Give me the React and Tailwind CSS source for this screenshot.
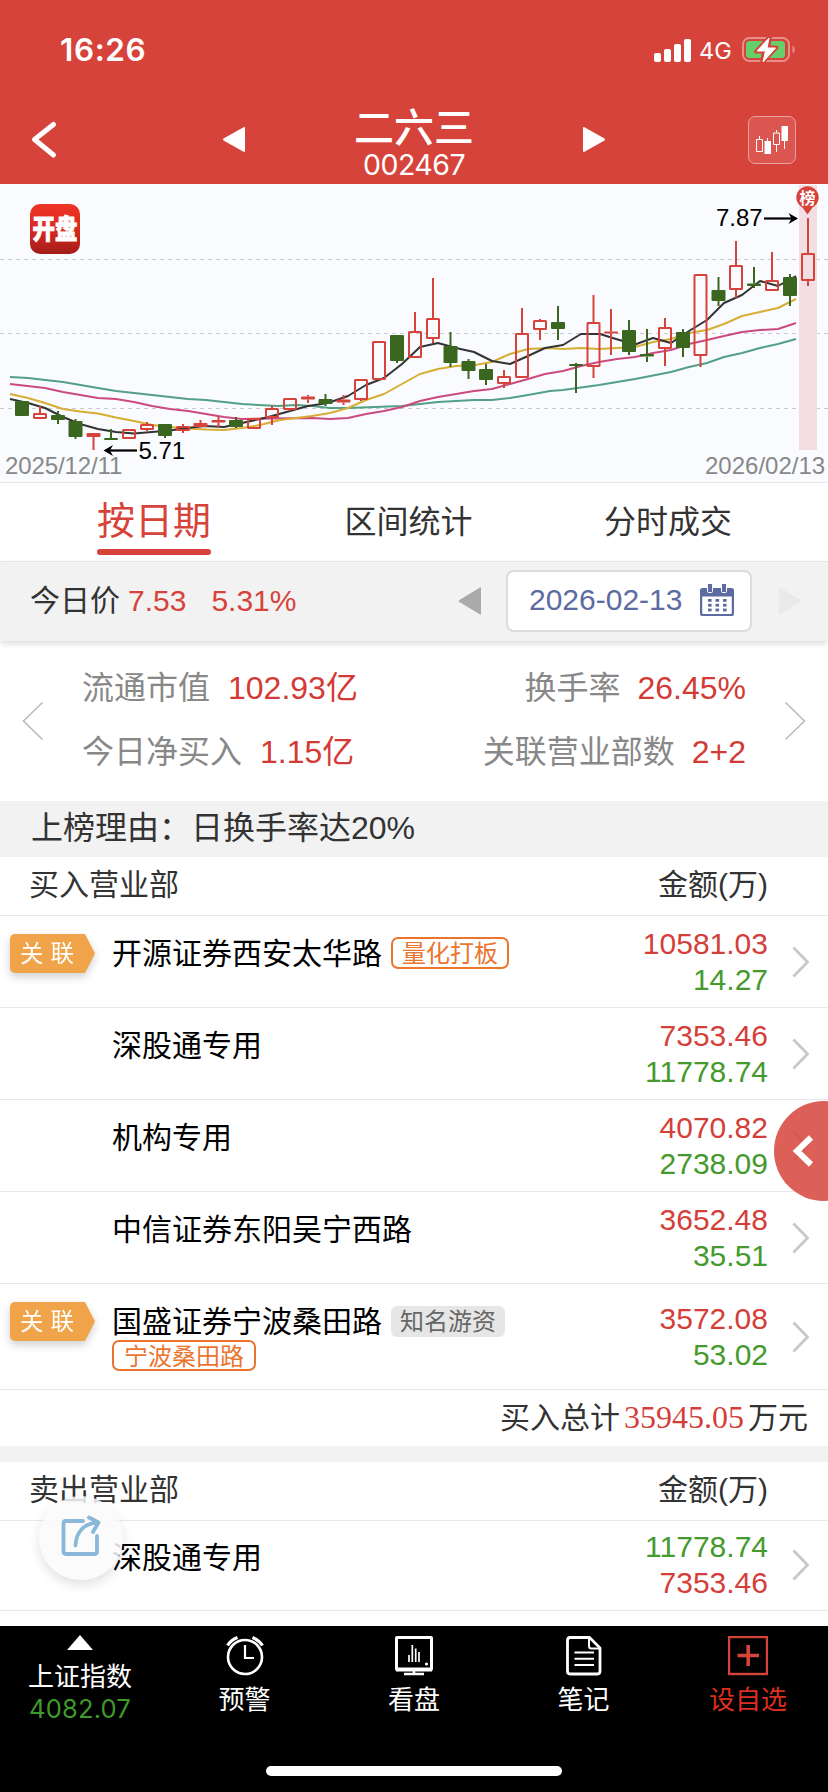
const UP = '#d6433b';
const DOWN = '#3b661f';

// [centre x, direction, high, body top, body bottom, low]
const candles = [
  [22, 'g', 401, 401, 416, 416], [40, 'r', 406, 413, 419, 419], [58, 'g', 411, 415, 420, 424],
  [75.5, 'g', 419, 421, 437, 439], [93.5, 's', 433, 433, 437, 450], [111, 'g', 429, 438, 440, 440],
  [129, 'r', 429, 429, 439, 439], [147, 'r', 422, 424, 430, 431], [165, 'g', 424, 424, 436, 438],
  [183, 'r', 424, 426, 431, 433], [200.5, 's', 420, 423, 427, 427], [218.5, 's', 416, 420, 422.5, 427],
  [236, 'g', 417, 420, 427, 428], [254, 'r', 418, 418, 429, 429], [272, 'r', 406, 408, 418, 425],
  [290, 'r', 398, 398, 410, 411], [308, 's', 395, 396.5, 399.5, 403], [325.5, 'g', 394, 399, 404, 406],
  [343.5, 's', 395, 399.5, 402.5, 405], [361, 'r', 379, 379, 400, 401], [379, 'r', 341, 341, 380, 380],
  [397, 'g', 335, 335, 361, 363], [415, 'r', 312, 331, 358, 358], [433, 'r', 278, 318, 339, 343],
  [450.5, 'g', 332, 346, 363, 367], [468.5, 'g', 359, 361, 371, 379], [486, 'g', 364, 369, 380, 385],
  [504, 'r', 370, 376, 384, 388], [522, 'r', 308, 333, 378, 378], [540, 'r', 319, 320, 330, 340],
  [558, 'g', 306, 322, 329, 340], [576, 'g', 363, 364, 366, 393], [593.5, 'r', 295, 322, 367, 378],
  [611, 's', 309, 331.5, 333.5, 355], [629, 'g', 320, 330, 352, 355], [647, 'g', 329, 354, 356.5, 362],
  [665, 'r', 318, 327, 349, 366], [683, 'g', 329, 332, 348, 357], [700.5, 'r', 274, 274, 356, 367],
  [718.5, 'g', 277, 290, 301, 306], [736, 'r', 241, 265, 290, 298], [754, 'g', 267, 283.5, 286, 288],
  [772, 'r', 252, 280, 291, 291], [790, 'g', 274, 277, 296, 306], [808, 'r', 218, 253, 281, 286],
];

const averages = [
  ['#53a084', '10,377 28,378 63,382 98,388 116,391 152,395 188,399 206,400 242,404 278,406 296,405 312,406 330,408 348,408 402,406 438,402 474,400 492,400 510,398 528,395 550,391 563,390 599,385 635,379 671,372 689,367 707,363 724,357 742,353 760,348 778,344 796,339'],
  ['#cb4a80', '10,384 45,388 63,392 98,398 116,399 134,402 152,406 170,409 188,411 206,414 224,417 242,419 272,418.5 312,418 330,419 348,418 366,414 384,411 402,407 420,401 438,397 456,394 474,391 492,389 510,384 528,379 545,374 563,371 581,366 599,362 617,359 635,357 653,353 671,350 689,344 707,340 724,336 742,332 760,330 778,329 796,323'],
  ['#d6ae35', '10,394 28,398 45,403 63,409 80,411.5 98,413.5 116,417.5 134,421 152,425 170,427 188,428.5 206,429.5 224,430 242,428 260,425 280,420 312,416 330,413 348,408 366,400 384,394 402,384 420,374 438,369 456,366 475,365 492,362 510,354 528,349 548,348 563,349 581,348 599,349 617,348 635,347 653,342 671,339 689,333 707,330 724,324 742,316 760,312 778,308 796,299'],
  ['#333333', '10,399 28,403 45,408 63,417 80,424 98,429 116,432 134,433.5 152,432 170,430.5 187,428 205,426 224,427 242,423 260,419 272,416 290,411 308,406 328,403 348,396 366,385 384,378 402,364 420,347 438,343 456,348 474,352 492,361 510,364 528,356 545,348 563,345 581,334 600,334 616,339 635,344.5 653,338 671,343 689,331 707,320 724,303 742,295 760,281 778,286 796,276'],
];

function Candle({ c }) {
  const [x, kind, high, top, bottom, low] = c;
  const color = kind === 'g' ? DOWN : UP;
  return (
    <g stroke={color} strokeWidth="2" fill={color}>
      {high < top && <line x1={x} x2={x} y1={high} y2={top} />}
      {low > bottom && <line x1={x} x2={x} y1={bottom} y2={low} />}
      {kind === 'r' ? (
        <rect x={x - 6} y={top + 1} width="12" height={bottom - top - 2} rx="0.5" fill="none" />
      ) : (
        <rect x={x - 7} y={top} width="14" height={bottom - top} rx="1" stroke="none" />
      )}
    </g>
  );
}

function Chart() {
  return (
    <svg className="block h-[299px] w-full bg-[#fafbff]" viewBox="0 184 828 299" fontFamily="'Liberation Sans', sans-serif" fontSize="24">
      <defs>
        <linearGradient id="logo" x1="0" y1="0" x2="0" y2="1">
          <stop offset="0" stopColor="#ef3526" />
          <stop offset="0.5" stopColor="#d92a20" />
          <stop offset="1" stopColor="#a11d18" />
        </linearGradient>
      </defs>
      {[259.5, 333.5, 408.5].map((y) => (
        <line key={y} x1="0" x2="828" y1={y} y2={y} stroke="#c9c9ce" strokeDasharray="4 4" />
      ))}
      <rect x="30" y="204" width="50" height="50" rx="10" fill="url(#logo)" />
      <text transform="translate(55 239) scale(0.83 1)" textAnchor="middle" fontSize="27" fontWeight="900" fill="#fff" stroke="#fff" strokeWidth="0.8" fontFamily="'Noto Sans CJK SC', sans-serif">开盘</text>
      {averages.map(([color, points]) => (
        <polyline key={color} points={points} fill="none" stroke={color} strokeWidth="2" strokeLinejoin="round" />
      ))}
      <rect x="799" y="185" width="18" height="265" fill="#f3dfe3" />
      {candles.map((c) => <Candle key={c[0]} c={c} />)}
      <path d="M807.500 214.500 L802.500 207.500 A11.200 11.200 0 1 1 812.500 207.500 Z" fill={UP} />
      <text x="807.500" y="203.500" textAnchor="middle" fontSize="16" fontWeight="700" fill="#fff" fontFamily="'Noto Sans CJK SC', sans-serif">榜</text>
      <text x="716" y="226" fill="#000">7.87</text>
      <path d="M764 218.500H796" stroke="#000" strokeWidth="2.200" />
      <path d="M798 218.500L788.500 213L791.500 218.500L788.500 224Z" fill="#000" />
      <text x="138.500" y="459" fill="#000">5.71</text>
      <path d="M137 450.500H106" stroke="#000" strokeWidth="2.200" />
      <path d="M103.500 450.500L113 445L110 450.500L113 456Z" fill="#000" />
      <text x="5" y="474" fill="#888" letterSpacing="-0.1">2025/12/11</text>
      <text x="705" y="474" fill="#888">2026/02/13</text>
      <rect x="0" y="482" width="828" height="1" fill="#e6e7ea" />
    </svg>
  );
}

function StatusBar() {
  return (
    <div className="flex h-[98px] items-start justify-between pl-[60px] pr-[32px] pt-[32px] text-white">
      <div className="font-['Inter',sans-serif] text-[31.500px] font-semibold leading-[36px] tracking-[0.6px]">16:26</div>
      <div className="flex items-center pt-[5px]">
        <svg className="h-[25px] w-[38px]" viewBox="0 0 38 25" fill="#fff">
          <rect x="0" y="15" width="7" height="9" rx="2" />
          <rect x="10" y="11" width="7" height="13" rx="2" />
          <rect x="20" y="6" width="7" height="18" rx="2" />
          <rect x="30" y="1" width="7" height="23" rx="2" />
        </svg>
        <span className="ml-[7px] w-[43px] font-['Inter',sans-serif] text-[23.500px] leading-[25px]">4G</span>
        <svg className="h-[27px] w-[54px]" viewBox="0 0 54 27">
          <rect x="1" y="1" width="46" height="23" rx="6.500" fill="none" stroke="#e78f8a" strokeWidth="2" />
          <rect x="4" y="4" width="39" height="17" rx="3.500" fill="#65cf69" />
          <path d="M50.500 8.500a4.600 4.600 0 0 1 0 8z" fill="#e78f8a" />
          <path d="M28 -0.500L14 14.500H22L20 26L34.500 10.500H26.500Z" fill="#fff" stroke="#d6433b" strokeWidth="4" strokeLinejoin="round" />
          <path d="M27 1L15 14H23.500L21 25L33.500 11H25Z" fill="#fff" stroke="#fff" strokeWidth="1" strokeLinejoin="round" />
        </svg>
      </div>
    </div>
  );
}

function Header() {
  return (
    <header className="h-[184px] bg-[#d6433b]">
      <StatusBar />
      <div className="flex h-[86px] items-start justify-between pl-[30px] pr-[32px] text-white">
        <svg className="mt-[22px] h-[40px] w-[28px]" viewBox="0 0 28 40" fill="none" stroke="#fff" strokeWidth="5" strokeLinecap="round" strokeLinejoin="round">
          <path d="M23.500 4.500L4.500 19.500L23.500 35" />
        </svg>
        <div className="ml-[22px] flex items-start">
          <svg className="mt-[28px] h-[27px] w-[24px]" viewBox="0 0 24 27" fill="#fff"><path d="M22 1Q23 1 23 2V25Q23 26 22 26L1.500 14.500Q0.500 13.500 1.500 12.500Z" /></svg>
          <div className="flex w-[336px] flex-col items-center">
            <div className="font-['Noto_Sans_CJK_SC',sans-serif] text-[40px] font-medium leading-[54px]">二六三</div>
            <div className="-mt-[3px] font-['Inter',sans-serif] text-[28.500px] leading-[32px] tracking-[-0.5px]">002467</div>
          </div>
          <svg className="mt-[28px] h-[27px] w-[24px]" viewBox="0 0 24 27" fill="#fff"><path d="M2 1Q1 1 1 2V25Q1 26 2 26L22.500 14.500Q23.500 13.500 22.500 12.500Z" /></svg>
        </div>
        <svg className="mt-[18px] h-[48px] w-[48px]" viewBox="0 0 48 48" fill="none" stroke="#fff">
          <rect x="0.500" y="0.500" width="47" height="47" rx="6.500" fill="#db5650" stroke="#eba19d" />
          <path d="M11.500 20v3M8.500 23.500h6v12h-6zM28.500 14v2.500M28.500 29v7M25.500 17h6v11.500h-6zM19.500 22v4M36.500 25v8" strokeWidth="1" />
          <path d="M16.500 25h6.500v13h-6.500zM33.500 10h6.500v15h-6.500z" fill="#fff" stroke="none" />
        </svg>
      </div>
    </header>
  );
}

function Tabs() {
  return (
    <nav className="flex h-[78px] justify-between pl-[97px] pr-[96px] font-['Noto_Sans_CJK_SC',sans-serif] text-[32px] leading-[72px] text-[#333]">
      <div className="flex flex-col text-[38px] leading-[66px] text-[#d6433b]">
        <span className="h-[66px] pt-[2px]">按日期</span>
        <span className="h-[6px] w-[114px] rounded-full bg-[#d6433b]" />
      </div>
      <div className="pl-[2px]">区间统计</div>
      <div>分时成交</div>
    </nav>
  );
}

function CalendarIcon() {
  return (
    <svg className="h-[33px] w-[34px]" viewBox="0 0 34 33" fill="#5c6ba1">
      <path fillRule="evenodd" d="M2.500 4H31.500Q34 4 34 6.500V30Q34 32 32 32H2Q0 32 0 30V6.500Q0 4 2.500 4ZM2.200 12.500V29Q2.200 30 3.200 30H30.800Q31.800 30 31.800 29V12.500Z" />
      <rect x="7.500" y="-0.500" width="5" height="9" rx="1" stroke="#fff" strokeWidth="1" />
      <rect x="21.500" y="-0.500" width="5" height="9" rx="1" stroke="#fff" strokeWidth="1" />
      {[15, 19.800, 24.600].map((y) => [8, 15.500, 23].map((x) => <rect key={`${x}-${y}`} x={x} y={y} width="3.600" height="2.800" />))}
    </svg>
  );
}

function PriceBar() {
  return (
    <div className="relative z-10 flex h-[80px] items-center border-t border-[#e6e6e6] bg-[#f2f2f2] pb-[2px] pl-[30px] pr-[26px] font-['Liberation_Sans','Noto_Sans_CJK_SC',sans-serif] text-[30px] leading-[40px] text-[#d6433b] shadow-[0_3px_6px_rgba(0,0,0,0.13)]">
      <span className="text-[#333]">今日价</span>
      <span className="ml-[8px]">7.53</span>
      <span className="ml-[25px]">5.31%</span>
      <svg className="ml-auto h-[28px] w-[23px]" viewBox="0 0 23 28" fill="#aaa"><path d="M22 0.500Q23 0 23 1V27Q23 28 22 27.500L1 14.800Q0 14 1 13.200Z" /></svg>
      <div className="ml-[25px] flex h-[62px] w-[246px] items-center justify-between rounded-[8px] border-2 border-[#dcdcdc] bg-white pl-[21px] pr-[16px] text-[#5c6ba1]">
        <span className="-mt-[2px]">2026-02-13</span>
        <CalendarIcon />
      </div>
      <svg className="ml-[27px] h-[28px] w-[23px]" viewBox="0 0 23 28" fill="#e9e9e9"><path d="M1 0.500Q0 0 0 1V27Q0 28 1 27.500L22 14.800Q23 14 22 13.200Z" /></svg>
    </div>
  );
}

function Stat({ label, value, gap }) {
  return (
    <div className={`flex ${gap}`}>
      <span className="text-[#888]">{label}</span>
      <span className="text-[#d43a35]">{value}</span>
    </div>
  );
}

function Stats() {
  return (
    <section className="flex h-[160px] items-start pl-[22px] pr-[22px] pt-[15px] font-['Liberation_Sans','Noto_Sans_CJK_SC',sans-serif] text-[32px] leading-[64px]">
      <svg className="mt-[45px] h-[40px] w-[22px]" viewBox="0 0 22 40" fill="none" stroke="#bbb" strokeWidth="1.600"><path d="M20.500 1.500L1.500 20L20.500 38.500" /></svg>
      <div className="flex flex-1 justify-between pl-[38px] pr-[38px]">
        <div>
          <Stat label="流通市值" value="102.93亿" gap="gap-[18px]" />
          <Stat label="今日净买入" value="1.15亿" gap="gap-[18px]" />
        </div>
        <div className="flex flex-col items-end">
          <Stat label="换手率" value="26.45%" gap="gap-[17px]" />
          <Stat label="关联营业部数" value="2+2" gap="gap-[17px]" />
        </div>
      </div>
      <svg className="mt-[45px] h-[40px] w-[22px]" viewBox="0 0 22 40" fill="none" stroke="#bbb" strokeWidth="1.600"><path d="M1.500 1.500L20.500 20L1.500 38.500" /></svg>
    </section>
  );
}

function ListHead({ title }) {
  return (
    <div className="flex h-[59px] justify-between border-b border-[#e8e8e8] pl-[29px] pr-[60px] font-['Liberation_Sans','Noto_Sans_CJK_SC',sans-serif] text-[30px] leading-[56px] text-[#333]">
      <span>{title}</span>
      <span>金额(万)</span>
    </div>
  );
}

function LinkBadge() {
  return (
    <div className="mt-[18px] h-[39px] w-[85px] drop-shadow-[0_4px_4px_rgba(0,0,0,0.18)]">
      <div className="h-[39px] rounded-l-[5px] bg-[#f1a349] pl-[10px] text-[23.500px] leading-[36px] tracking-[7px] text-white [clip-path:polygon(0_0,75px_0,85px_50%,75px_100%,0_100%)]">关联</div>
    </div>
  );
}

function Row({ name, linked, tag, grey, extra, top, bottom, sell, height = 'h-[92px]' }) {
  return (
    <div className={`flex border-b border-[#e8e8e8] pl-[10px] pr-[18px] font-['Noto_Sans_CJK_SC',sans-serif] ${height}`}>
      <div className="w-[85px]">{linked && <LinkBadge />}</div>
      <div className="flex-1 pl-[17px] pt-[17px]">
        <div className="flex h-[40px] items-center gap-[9px] text-[30px] leading-[36px] text-black">
          <span className="h-[40px]">{name}</span>
          {tag && (grey
            ? <span className="h-[31px] rounded-[6px] bg-[#e6e6e6] px-[9px] text-[24px] leading-[27px] text-[#666]">{tag}</span>
            : <span className="h-[32px] rounded-[7px] border-2 border-[#e9752f] px-[9px] text-[24px] leading-[26px] text-[#e9752f]">{tag}</span>)}
        </div>
        {extra && <span className="-mt-px block h-[31px] w-fit rounded-[7px] border-2 border-[#e9752f] px-[10px] text-[24px] leading-[25px] text-[#e9752f]">{extra}</span>}
      </div>
      <div className={`flex flex-col items-end justify-center font-['Liberation_Sans',sans-serif] text-[30px] leading-[36px] ${sell ? 'text-[#459a2d]' : 'text-[#d43f3a]'}`}>
        <span>{top}</span>
        <span className={sell ? 'text-[#d43f3a]' : 'text-[#459a2d]'}>{bottom}</span>
      </div>
      <svg className="ml-[24px] h-[32px] w-[18px] self-center" viewBox="0 0 18 32" fill="none" stroke="#c8c8c8" strokeWidth="2.800"><path d="M1.500 1.500L15.500 16L1.500 30.500" /></svg>
    </div>
  );
}

function ClockIcon() {
  return (
    <svg className="h-[40px] w-[40px]" viewBox="0 0 40 40" fill="none" stroke="#fff" strokeWidth="2.600">
      <circle cx="20" cy="21" r="17" />
      <path d="M20 9V22H29" strokeWidth="2.200" />
      <path d="M2.500 9.500Q6 4 12.500 1.500M37.500 9.500Q34 4 27.500 1.500" strokeWidth="3.200" />
    </svg>
  );
}

function MonitorIcon() {
  return (
    <svg className="h-[40px] w-[40px]" viewBox="0 0 40 40" fill="none" stroke="#fff">
      <rect x="2.500" y="1.500" width="35" height="32" rx="0.500" strokeWidth="3" />
      <path d="M2 33.500H38" strokeWidth="4" />
      <path d="M20 34V38M10 38H30" strokeWidth="2.500" />
      <path d="M15 19V26M18.300 9V26M21.700 12.500V26M25 16V26" strokeWidth="1.700" />
      <circle cx="32.500" cy="28" r="1.600" fill="#fff" stroke="none" />
    </svg>
  );
}

function NoteIcon() {
  return (
    <svg className="h-[40px] w-[40px]" viewBox="0 0 40 40" fill="none" stroke="#fff" strokeWidth="2.800" strokeLinejoin="round">
      <path d="M6 1.500H25.500L36 12V35Q36 38 33.500 38H6Q3.500 38 3.500 35V4.500Q3.500 1.500 6 1.500Z" />
      <path d="M25 2V10Q25 12.500 27.500 12.500H35.500" strokeWidth="2" />
      <path d="M10.500 16.500H30M10.500 22.800H30M10.500 29H30" strokeWidth="2" />
    </svg>
  );
}

function PlusIcon() {
  return (
    <svg className="h-[40px] w-[40px]" viewBox="0 0 40 40" fill="none" stroke="#d6433b">
      <rect x="1" y="1" width="38" height="37" strokeWidth="2.400" />
      <path d="M9.500 19.500H31M20.200 9V30" strokeWidth="3.600" />
    </svg>
  );
}

function NavItem({ icon, label, className }) {
  return (
    <div className={`flex flex-col items-center pt-[10px] leading-[42px] ${className}`}>
      {icon}
      <span className="mt-px">{label}</span>
    </div>
  );
}

function BottomBar() {
  return (
    <footer className="flex h-[166px] flex-col bg-black font-['Noto_Sans_CJK_SC',sans-serif] text-[26px] text-white">
      <div className="flex h-[140px]">
        <div className="flex w-[160px] flex-col items-center pt-[9px]">
          <svg className="h-[15px] w-[26px]" viewBox="0 0 26 15" fill="#fff"><path d="M13 0L26 15H0Z" /></svg>
          <span className="mt-[4px] leading-[42px]">上证指数</span>
          <span className="-mt-[3px] font-['Inter',sans-serif] text-[25.500px] leading-[32px] tracking-[0.2px] text-[#3f9a2a]">4082.07</span>
        </div>
        <NavItem className="w-[169px]" icon={<ClockIcon />} label="预警" />
        <NavItem className="w-[170px]" icon={<MonitorIcon />} label="看盘" />
        <NavItem className="w-[169px]" icon={<NoteIcon />} label="笔记" />
        <NavItem className="w-[160px] text-[#dd2f21]" icon={<PlusIcon />} label="设自选" />
      </div>
      <div className="h-[10px] w-[296px] self-center rounded-full bg-white" />
    </footer>
  );
}

export default function App() {
  return (
    <div className="relative flex h-[1792px] w-[828px] flex-col overflow-hidden bg-white">
      <Header />
      <Chart />
      <Tabs />
      <PriceBar />
      <Stats />
      <div className="h-[56px] bg-[#f2f2f2] pl-[31px] font-['Liberation_Sans','Noto_Sans_CJK_SC',sans-serif] text-[32px] leading-[55px] text-[#333]">上榜理由：日换手率达20%</div>
      <ListHead title="买入营业部" />
      <Row name="开源证券西安太华路" linked tag="量化打板" top="10581.03" bottom="14.27" />
      <Row name="深股通专用" top="7353.46" bottom="11778.74" />
      <Row name="机构专用" top="4070.82" bottom="2738.09" />
      <Row name="中信证券东阳吴宁西路" top="3652.48" bottom="35.51" />
      <Row name="国盛证券宁波桑田路" linked tag="知名游资" grey extra="宁波桑田路" top="3572.08" bottom="53.02" height="h-[106px]" />
      <div className="flex h-[56px] justify-end gap-[4px] pr-[20px] font-['Noto_Sans_CJK_SC',sans-serif] text-[30px] leading-[50px] text-[#333]">
        <span>买入总计</span>
        <span className="font-['Liberation_Serif',serif] text-[32px] leading-[55px] text-[#d43f3a]">35945.05</span>
        <span>万元</span>
      </div>
      <div className="h-[16px] bg-[#f2f2f2]" />
      <ListHead title="卖出营业部" />
      <Row name="深股通专用" top="11778.74" bottom="7353.46" sell height="h-[91px] -mt-px" />
      <div className="flex-1" />
      <BottomBar />

      <div className="absolute left-[774px] top-[1101px] h-[100px] w-[100px] rounded-full bg-[#d6433b]/85">
        <svg className="ml-[18px] mt-[34px] h-[32px] w-[22px]" viewBox="0 0 22 32" fill="none" stroke="#fff" strokeWidth="6"><path d="M19 2.500L5 16L19 29.500" /></svg>
      </div>
      <div className="absolute left-[39px] top-[1496px] flex h-[84px] w-[84px] items-center justify-center rounded-full bg-[#fafafa]/85 shadow-[0_5px_12px_rgba(0,0,0,0.12)]">
        <svg className="-mt-[4px] h-[44px] w-[44px]" viewBox="60 1514 44 44" fill="none" stroke="#8ab8d8" strokeWidth="3.800" strokeLinecap="round" strokeLinejoin="round">
          <path d="M84 1521H67Q64.500 1521 64.500 1523.500V1551.500Q64.500 1554 67 1554H95.500Q98 1554 98 1551.500V1536" />
          <path d="M76.500 1545.500C77 1533 84 1523.500 99 1522.500M90 1517.500L99.500 1522.500L94 1532" />
        </svg>
      </div>
    </div>
  );
}
